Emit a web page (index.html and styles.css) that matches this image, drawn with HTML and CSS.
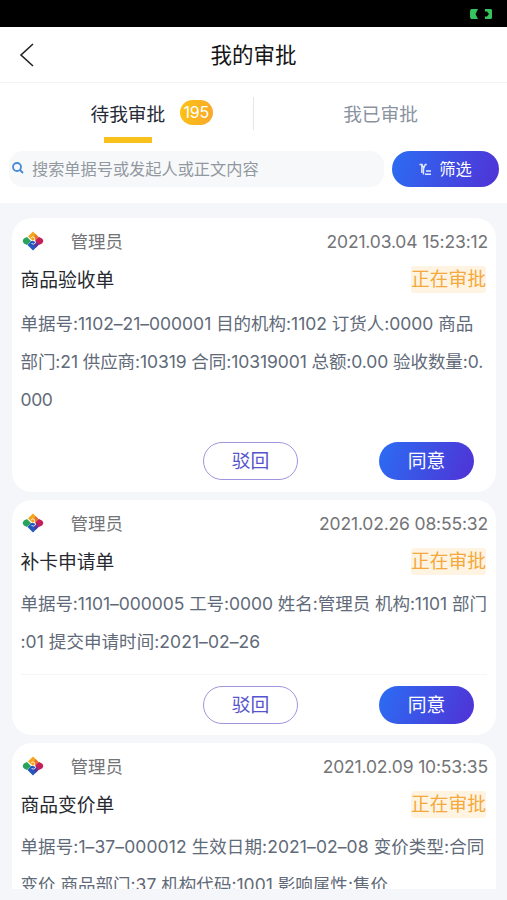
FILE: index.html
```html
<!DOCTYPE html>
<html lang="zh-CN">
<head>
<meta charset="utf-8">
<title>我的审批</title>
<link rel="stylesheet" href="styles.css">
</head>
<body>
<svg class="defs" width="0" height="0">
  <symbol id="logo" viewBox="0 0 22 22">
    <path fill="#f4a51c" d="M11 1.500 16 6.500 11 11 6 6.500Z"/>
    <path fill="#e8742c" d="M13.500 4 17 7.500 14 11 11.500 8Z"/>
    <path fill="#c61f58" d="M17 7 20 8.500q2.500 2.500 0 5L17 15l-4-4Z"/>
    <path fill="#27a35c" d="M5 7 2 8.500q-2.500 2.500 0 5L5 15l4-4Z"/>
    <path fill="#2458bd" d="M11 20.500 5.500 15l3.500-4h4l3.500 4Z"/>
    <path fill="#60309b" d="M13.500 18 17 14.500 14 11.500l-2 3Z"/>
    <path fill="none" stroke="#fff" stroke-width=".8" d="M9 8q1.500-2 3.500-.5 1 2-1 3.300 2.500.2 2 2.200-1.500 2-4 .5"/>
  </symbol>
</svg>
<div class="status-bar">
  <svg class="battery" width="24" height="12" viewBox="0 0 24 12"><path d="M2 1h7L6.500 6 9 11H2L1 9V3ZM16 1h6l1 1v8l-1 1h-6V8.500h2L20 6l-2-2.500h-2Z"/></svg>
</div>
<header class="nav">
  <svg class="back" width="16" height="26" viewBox="0 0 16 26"><path d="M14 2 2 13l12 11"/></svg>
  <h1>我的审批</h1>
</header>
<section class="panel">
  <div class="tabs">
    <div class="tab active"><span class="tab-name">待我审批</span><span class="badge">195</span></div>
    <div class="tab"><span>我已审批</span></div>
  </div>
  <div class="tools">
    <div class="search">
      <svg width="14" height="14" viewBox="0 0 14 14"><circle cx="6" cy="6" r="4"/><path d="m9 9 3 3"/></svg>
      <span>搜索单据号或发起人或正文内容</span>
    </div>
    <div class="filter">
      <svg width="13" height="13" viewBox="0 0 13 13"><path d="M.5 1.500h2.500L4.800 5 6.300 1.500h1.500M4.500 5v6.500M2.800 2v8M7 8h5M6 11.300h6"/></svg>
      <span>筛选</span>
    </div>
  </div>
</section>
<main class="list">
  <article class="card first">
    <div class="meta"><svg class="logo"><use href="#logo"/></svg><span class="who">管理员</span><time>2021.03.04 15:23:12</time></div>
    <div class="heading"><h2>商品验收单</h2><span class="state">正在审批</span></div>
    <div class="body"><p class="l1">单据号:1102–21–000001 目的机构:1102 订货人:0000 商品</p><p class="l2">部门:21 供应商:10319 合同:10319001 总额:0.00 验收数量:0.</p><p class="l3">000</p></div>
    <div class="actions"><span class="btn reject">驳回</span><span class="btn agree">同意</span></div>
  </article>
  <article class="card second">
    <div class="meta"><svg class="logo"><use href="#logo"/></svg><span class="who">管理员</span><time>2021.02.26 08:55:32</time></div>
    <div class="heading"><h2>补卡申请单</h2><span class="state">正在审批</span></div>
    <div class="body"><p class="l4">单据号:1101–000005 工号:0000 姓名:管理员 机构:1101 部门</p><p class="l5">:01 提交申请时间:2021–02–26</p></div>
    <div class="actions ruled"><span class="btn reject">驳回</span><span class="btn agree">同意</span></div>
  </article>
  <article class="card third">
    <div class="meta"><svg class="logo"><use href="#logo"/></svg><span class="who">管理员</span><time>2021.02.09 10:53:35</time></div>
    <div class="heading"><h2>商品变价单</h2><span class="state">正在审批</span></div>
    <div class="body"><p class="l6">单据号:1–37–000012 生效日期:2021–02–08 变价类型:合同</p><p class="l7">变价 商品部门:37 机构代码:1001 影响属性:售价</p></div>
  </article>
</main>
</body>
</html>
```
FILE: styles.css
```css
* { box-sizing: border-box; margin: 0; padding: 0; }
body {
  width: 507px; height: 900px; overflow: hidden;
  background: #f5f6fa;
  font-family: Inter, "Noto Sans CJK SC", sans-serif;
  display: flex; flex-direction: column;
}
svg { display: block; flex: none; }
.defs { position: absolute; }
.status-bar { height: 27px; background: #000; display: flex; justify-content: flex-end; padding: 8px 14px 0 0; flex: none; }
.battery { fill: #35c55f; }
.nav { height: 56px; flex: none; background: #fff; border-bottom: 1px solid #f3f3f4; display: grid; grid-template-columns: 60px 1fr 60px; align-items: center; }
.back { margin-left: 19px; fill: none; stroke: #222; stroke-width: 1.6; }
h1 { font-size: 21.5px; font-weight: 400; line-height: 30px; text-align: center; color: #151515; }
.panel { height: 120px; flex: none; background: #fff; }
.tabs { height: 61px; display: grid; grid-template-columns: 253px 1fr; }
.tab { display: flex; justify-content: center; font-size: 18.7px; line-height: 28px; padding: 18px 0 0 1px; color: #8a93a0; }
.tab.active { justify-content: flex-start; padding-left: 90.5px; color: #252a35; position: relative; }
.tab.active::after { content: ""; position: absolute; left: 104px; bottom: 1px; width: 48px; height: 6px; background: #f8c11c; }
.tab.active::before { content: ""; position: absolute; right: -1px; top: 14px; width: 1px; height: 33px; background: #e5e6ea; }
.badge { margin: -1px 0 0 14.5px; width: 33px; height: 25px; border-radius: 13px; background: linear-gradient(100deg, #fbc313, #f9a72c); color: #fff; font-size: 16px; line-height: 25px; text-align: center; letter-spacing: -.2px; }
.tools { display: flex; padding: 7px 8px 0 9px; gap: 8px; }
.search { width: 376px; height: 36px; border-radius: 14px; background: #f7f8fa; display: flex; align-items: center; gap: 7px; padding: 0 0 2px 2px; color: #92989f; font-size: 16.2px; }
.search svg { fill: none; stroke: #448bd8; stroke-width: 1.8; }
.filter { width: 107px; height: 36px; border-radius: 18px; background: linear-gradient(110deg, #2b6df3, #5032d5); color: #fff; display: flex; align-items: center; justify-content: center; gap: 7px; padding-bottom: 2px; font-size: 16.3px; }
.filter svg { fill: none; stroke: #dfe9ff; stroke-width: 1.4; margin-top: 2px; }
.list { flex: none; height: 686px; overflow: hidden; padding: 15px 11px 0 12px; display: flex; flex-direction: column; gap: 8px; }
.card { flex: none; border-radius: 20px; background: #fff; padding: 8px 9px 0 8.5px; overflow: hidden; }
.first { height: 274px; }
.second { height: 235px; }
.third { height: 146px; border-radius: 20px 20px 0 0; }
.meta { display: flex; align-items: center; height: 28px; font-size: 17.5px; color: #737477; }
.logo { width: 22px; height: 22px; margin: 2px 0 0 1px; }
.who { margin-left: 27px; }
time { margin-left: auto; margin-right: -1px; letter-spacing: -.16px; margin-top: 2px; }
.heading { display: flex; justify-content: space-between; align-items: center; height: 48px; }
h2 { font-size: 18.8px; font-weight: 400; color: #26292f; }
.state { font-size: 18.8px; line-height: 27px; color: #f5a83c; background: #fff4e2; border-radius: 3px; margin: 3px 1px 0 0; }
.body { padding-top: 1px; font-size: 17.5px; line-height: 38.2px; color: #616a78; white-space: nowrap; }
.first .body { padding-top: 2.5px; }
.l1 { letter-spacing: -.02px; }
.l2 { letter-spacing: -.08px; }
.l3 { letter-spacing: -.4px; }
.l4 { letter-spacing: -.05px; }
.l5 { letter-spacing: .06px; }
.l6 { letter-spacing: .09px; }
.l7 { letter-spacing: .02px; }
.actions { display: flex; justify-content: flex-end; gap: 81px; padding: 23px 13px 0 0; }
.ruled { border-top: 1px solid #f5f5f7; margin-top: 12.5px; padding-top: 11px; }
.btn { width: 95px; height: 38px; border-radius: 19px; font-size: 18.8px; line-height: 38px; text-align: center; }
.reject { border: 1px solid #9d96dc; color: #5654cd; line-height: 37px; }
.agree { background: linear-gradient(110deg, #2b6df3, #5032d5); color: #fff; line-height: 39px; }
```
